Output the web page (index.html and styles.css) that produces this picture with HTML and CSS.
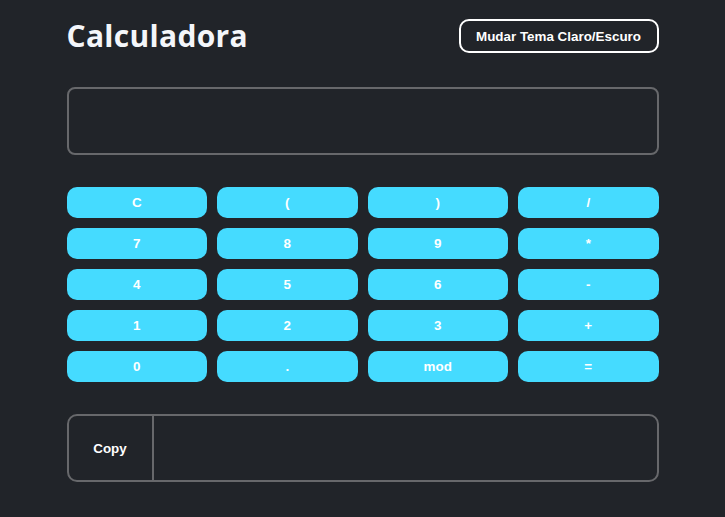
FILE: index.html
```html
<!DOCTYPE html>
<html lang="pt">
<head>
<meta charset="utf-8">
<title>Calculadora</title>
<link rel="stylesheet" href="styles.css">
</head>
<body>
<main class="app">
  <header class="header">
    <h1 class="title">Calculadora</h1>
    <button class="theme-btn">Mudar Tema Claro/Escuro</button>
  </header>
  <div class="display"></div>
  <div class="keys">
    <button class="key">C</button>
    <button class="key">(</button>
    <button class="key">)</button>
    <button class="key">/</button>
    <button class="key">7</button>
    <button class="key">8</button>
    <button class="key">9</button>
    <button class="key">*</button>
    <button class="key">4</button>
    <button class="key">5</button>
    <button class="key">6</button>
    <button class="key">-</button>
    <button class="key">1</button>
    <button class="key">2</button>
    <button class="key">3</button>
    <button class="key">+</button>
    <button class="key">0</button>
    <button class="key">.</button>
    <button class="key">mod</button>
    <button class="key">=</button>
  </div>
  <div class="copy-box">
    <button class="copy-btn">Copy</button>
    <div class="copy-out"></div>
  </div>
</main>
</body>
</html>
```
FILE: styles.css
```css
html, body {
  margin: 0;
  padding: 0;
  background: #212429;
  height: 100%;
}
body {
  font-family: "Liberation Sans", Arial, sans-serif;
  color: #fff;
}
.app {
  width: 592px;
  margin: 0 auto;
  padding-top: 19px;
}
.header {
  display: flex;
  justify-content: space-between;
  align-items: center;
  height: 34px;
}
.title {
  margin: 0;
  font-family: "Open Sans", "Noto Sans", sans-serif;
  font-weight: 700;
  font-size: 30px;
  letter-spacing: 0.3px;
  color: #f4f6fa;
  line-height: 34px;
}
.theme-btn {
  height: 34px;
  width: 200px;
  border: 2px solid #fff;
  border-radius: 10px;
  background: transparent;
  color: #fff;
  font-family: "Liberation Sans", Arial, sans-serif;
  font-weight: 700;
  font-size: 13.4px;
  padding: 0;
}
.display {
  margin-top: 34px;
  height: 68px;
  box-sizing: border-box;
  border: 2px solid #67686b;
  border-radius: 8px;
}
.keys {
  margin-top: 32px;
  display: grid;
  grid-template-columns: repeat(4, 1fr);
  column-gap: 10px;
  row-gap: 10px;
}
.key {
  height: 31px;
  border: none;
  border-radius: 10px;
  background: #45dbff;
  color: #fff;
  font-family: "Liberation Sans", Arial, sans-serif;
  font-weight: 700;
  font-size: 13.4px;
  padding: 0;
}
.copy-box {
  margin-top: 32px;
  height: 68px;
  box-sizing: border-box;
  border: 2px solid #67686b;
  border-radius: 10px;
  display: flex;
}
.copy-btn {
  width: 85px;
  border: none;
  border-right: 2px solid #67686b;
  background: transparent;
  color: #fff;
  font-family: "Liberation Sans", Arial, sans-serif;
  font-weight: 700;
  font-size: 13.4px;
  padding: 0;
}
.copy-out {
  flex: 1;
}
```
